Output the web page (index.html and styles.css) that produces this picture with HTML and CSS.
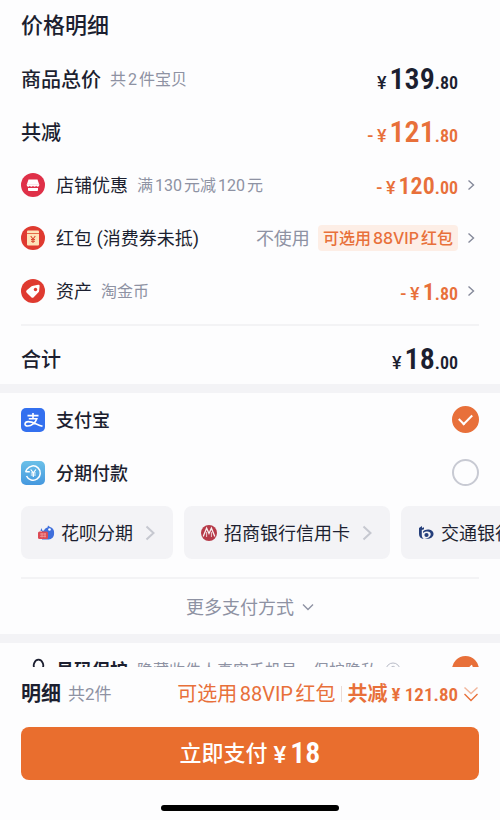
FILE: index.html
```html
<!DOCTYPE html>
<html lang="zh-CN">
<head>
<meta charset="utf-8">
<meta name="viewport" content="width=device-width, initial-scale=1">
<title>价格明细</title>
<link rel="stylesheet" href="styles.css">
</head>
<body>
<main class="sheet">
  <section class="prices">
    <h1 class="title">价格明细</h1>
    <div class="row">
      <h2 class="name">商品总价</h2><span class="note">共2件宝贝</span>
      <span class="price price-lg"><small class="yen">¥</small><b>139</b><small>.80</small></span>
    </div>
    <div class="row">
      <h2 class="name">共减</h2>
      <span class="price price-lg accent"><small class="yen">-&#8201;¥</small><b>121</b><small>.80</small></span>
    </div>
    <button class="row" type="button">
      <svg class="icon" viewBox="0 0 24 24"><circle cx="12" cy="12" r="12" fill="#df3048"/><path d="M7.500 6.500h9l1.800 5.200H5.700z" fill="#fff"/><path d="M5.700 11.500h12.600c0 2.600-2.400 2.600-3.100 1.200-.8 1.400-2.500 1.400-3.200 0-.8 1.400-2.500 1.400-3.200 0-.9 1.400-3.100 1.400-3.100-1.200z" fill="#fff"/><path d="M7 15h10v2a1 1 0 0 1-1 1H8a1 1 0 0 1-1-1z" fill="#fff"/></svg>
      <span class="label">店铺优惠</span><span class="note">满130元减120元</span>
      <span class="price accent"><small class="yen">-&#8201;¥</small><b>120</b><small>.00</small></span>
      <svg class="arrow" viewBox="0 0 8 12"><path d="M1.500 1.500L6.500 6l-5 4.500"/></svg>
    </button>
    <button class="row" type="button">
      <svg class="icon" viewBox="0 0 24 24"><circle cx="12" cy="12" r="12" fill="#df3a30"/><rect x="6" y="4.500" width="12" height="15" rx="1" fill="#fde3b8"/><path d="M6 7.500h12" stroke="#e56a48" stroke-width="1"/><path d="M9.700 10l2.300 3 2.300-3M12 13v4M10 13.500h4M10 15.300h4" fill="none" stroke="#dc4a32" stroke-width="1.100"/></svg>
      <span class="label">红包 (消费券未抵)</span>
      <span class="unused">不使用</span><span class="badge">可选用88VIP红包</span>
      <svg class="arrow" viewBox="0 0 8 12"><path d="M1.500 1.500L6.500 6l-5 4.500"/></svg>
    </button>
    <button class="row" type="button">
      <svg class="icon" viewBox="0 0 24 24"><circle cx="12" cy="12" r="12" fill="#df3a30"/><path d="M12.300 6.700l4.900-.9a1.200 1.200 0 0 1 1.400 1.300l-.5 5a2 2 0 0 1-.6 1.200l-4.800 4.900a1.700 1.700 0 0 1-2.400 0l-4.600-4.500a1.700 1.700 0 0 1 0-2.400l4.900-4a3 3 0 0 1 1.700-.6z" fill="#fff"/><circle cx="14.500" cy="10.500" r="1.700" fill="#df3a30"/></svg>
      <span class="label">资产</span><span class="note">淘金币</span>
      <span class="price accent"><small class="yen">-&#8201;¥</small><b>1</b><small>.80</small></span>
      <svg class="arrow" viewBox="0 0 8 12"><path d="M1.500 1.500L6.500 6l-5 4.500"/></svg>
    </button>
    <div class="row total">
      <h2 class="name">合计</h2>
      <span class="price price-lg"><small class="yen">¥</small><b>18</b><small>.00</small></span>
    </div>
  </section>

  <section class="payments">
    <label class="row">
      <svg class="icon" viewBox="0 0 24 24"><rect width="24" height="24" rx="5" fill="#3370ef"/><path d="M6.500 7.600h11M12 5v5.500M7.800 10.700h8c-1.300 4-5.300 7.300-9.100 7.300-4 0-3.300-4.400.5-4.400 4.300 0 8 2.700 14.300 4.700" fill="none" stroke="#fff" stroke-width="1.600"/></svg>
      <span class="label strong">支付宝</span>
      <input class="choice" type="radio" name="pay" checked>
    </label>
    <label class="row">
      <svg class="icon" viewBox="0 0 24 24"><defs><linearGradient id="sky" x2="0" y2="1"><stop stop-color="#6bc0e8"/><stop offset="1" stop-color="#4598df"/></linearGradient></defs><rect width="24" height="24" rx="5" fill="url(#sky)"/><path d="M6 8.200a7.200 7.200 0 1 1-.5 6.800M4.500 10.800h4.300M6 8l-1.500 2.800" fill="none" stroke="#fff" stroke-width="1.500"/><path d="M9.700 8.500l2.600 3.300 2.600-3.300M12.300 11.800V16M9.800 12h5M9.800 14h5" fill="none" stroke="#fff" stroke-width="1.200"/></svg>
      <span class="label strong">分期付款</span>
      <input class="choice" type="radio" name="pay">
    </label>
    <div class="chips">
      <button class="chip" type="button">
        <svg class="logo" viewBox="0 0 18 18"><path d="M7 6.500C8 4 9.500 4 10.500 3.500l.5-2 2 1.500c3.500 1 4.500 4 4 7.500-.5 4-4 5.500-8 5H5V7z" fill="#3f6fdc"/><circle cx="12.500" cy="5.500" r="1.300" fill="#fff"/><path d="M3.500 7l.8-3 1.300 3z" fill="#3f6fdc"/><rect x="1" y="7.500" width="10" height="7.500" rx="1.500" fill="#dc4a55"/><path d="M3 10h6M3 12.300h6M5 9v4.500M8 9v4.500" stroke="#f2a2a2" stroke-width=".8"/></svg>
        <span class="label">花呗分期</span>
        <svg class="more" viewBox="0 0 10 16"><path d="M1.500 1.500L8.500 8l-7 6.500"/></svg>
      </button>
      <button class="chip" type="button">
        <svg class="logo" viewBox="0 0 18 18"><circle cx="9" cy="9" r="8" fill="#b63b49"/><path d="M3.200 12.500L6.600 4.200 9 9.500l2.400-5.300 3.400 8.300" fill="none" stroke="#f8f0f2" stroke-width="1.300"/><path d="M6.600 8v5M11.400 8v5" stroke="#f8f0f2" stroke-width=".8"/></svg>
        <span class="label">招商银行信用卡</span>
        <svg class="more" viewBox="0 0 10 16"><path d="M1.500 1.500L8.500 8l-7 6.500"/></svg>
      </button>
      <button class="chip" type="button">
        <svg class="logo" viewBox="0 0 18 18"><path d="M2 4l3-2v2l2-.8v2L4.800 6v5c0 2 1 3.500 2.200 4-3.200-.3-5-2-5-5z" fill="#253f7b"/><path d="M6 7.500C8 4.500 16 4.500 16.500 9.500c.3 4-4.500 6.300-9 5 3 0 6.200-1.500 6.200-4.300 0-3-4.200-3.500-7.700-1.200z" fill="#253f7b"/><circle cx="9.500" cy="11" r="2.100" fill="#253f7b"/></svg>
        <span class="label">交通银行</span>
        <svg class="more" viewBox="0 0 10 16"><path d="M1.500 1.500L8.500 8l-7 6.500"/></svg>
      </button>
    </div>
    <button class="expand" type="button"><span class="label">更多支付方式</span>
      <svg viewBox="0 0 12 8"><path d="M1 1.500l5 5 5-5"/></svg>
    </button>
  </section>

  <section class="privacy">
    <label class="row">
      <svg class="icon" viewBox="0 0 24 24"><path d="M13.500 10.500c-1-2-1-4-.2-5.500 1.600-4.500 6.800-4.500 8.400 0 .8 1.500.8 3.500-.2 5.500" fill="none" stroke="#1c1f30" stroke-width="1.800"/></svg>
      <span class="label heavy">号码保护</span><span class="note">隐藏收件人真实手机号，保护隐私</span>
      <svg class="help" viewBox="0 0 16 16"><circle cx="8" cy="8" r="7"/><path d="M5.800 6.500c0-3 4.500-2.800 4.500-.2C10.300 8 8 8 8 10M8 11.300v1.200"/></svg>
      <input class="choice" type="checkbox" checked>
    </label>
  </section>
</main>

<footer class="paybar">
  <div class="summary">
    <strong>明细</strong><span class="count">共2件</span>
    <span class="offer">可选用88VIP红包</span>
    <span class="saved">共减<b>¥ 121.80</b></span>
    <svg viewBox="0 0 16 16"><path d="M1.500 1.500L8 7.500l6.500-6" opacity=".5"/><path d="M1.500 8L8 14.500 14.500 8"/></svg>
  </div>
  <button class="pay" type="button">立即支付 <b><small class="yen">¥</small>18</b></button>
  <div class="home"></div>
</footer>
</body>
</html>
```
FILE: styles.css
```css
:root {
  --ink: #1c1f30;
  --muted: #8e92a3;
  --accent: #e8703a;
  --fill: #f3f3f6;
  --sans: Roboto, "Noto Sans CJK SC", sans-serif;
  --digits: "Roboto Condensed", "Liberation Sans Narrow", Roboto, sans-serif;
}

* {
  box-sizing: border-box;
}

body {
  margin: 0;
  height: 100vh;
  display: flex;
  flex-direction: column;
  background: #fdfdfe;
  color: var(--ink);
  font: 18px/26px var(--sans);
  text-autospace: normal;
}

button {
  border: 0;
  padding: 0;
  background: none;
  color: inherit;
  font: inherit;
  text-align: left;
}

svg {
  flex: none;
  fill: none;
}

.sheet {
  flex: 1;
  min-height: 0;
  overflow: hidden;
}

.prices {
  padding: 0 21px;
}

.title {
  margin: 0;
  padding: 10px 0 10px;
  font-size: 22px;
  line-height: 32px;
  font-weight: 500;
}

.row {
  display: flex;
  align-items: center;
  width: 100%;
  height: 53px;
  white-space: nowrap;
}

.name,
.label,
.note,
.unused {
  padding-top: 3px;
}

.name {
  margin: 0;
  font-size: 20px;
  font-weight: 500;
}

.note {
  margin-left: 9px;
  color: var(--muted);
  font-size: 16px;
}

.icon {
  width: 24px;
  height: 24px;
  margin-right: 11px;
}

.strong {
  font-weight: 500;
}

.heavy {
  font-weight: 700;
}

.price {
  margin-left: auto;
  padding: 5px 21px 0 0;
  font: 600 24px/32px var(--digits);
}

.price b {
  margin-left: 3px;
  font-weight: 600;
}

.price small {
  font-size: 18px;
}

.price-lg {
  font-size: 30px;
}

.price .yen,
.pay .yen {
  font-family: Roboto, sans-serif;
  font-weight: 500;
}

.accent {
  color: var(--accent);
}

.arrow {
  width: 8px;
  height: 12px;
  margin-right: 4px;
  stroke: #85899a;
  stroke-width: 1.400;
}

.row > .price:has(+ .arrow) {
  padding-right: 9px;
}

.unused {
  margin-left: auto;
  color: var(--muted);
}

.badge {
  margin: 0 9px 0 8px;
  padding: 1px 5px 0;
  border-radius: 4px;
  background: #fdeee6;
  color: var(--accent);
  font: 500 16px/25px Inter, "Noto Sans CJK SC", sans-serif;
}

.total {
  height: 60px;
  margin-top: 7px;
  padding-top: 6px;
  border-top: 2px solid #f3f3f5;
}

.payments {
  padding: 0 21px;
  border-top: 9px solid var(--fill);
}

.choice {
  appearance: none;
  display: grid;
  place-items: center;
  width: 27px;
  height: 27px;
  margin: 0 0 0 auto;
  border: 2px solid #c8cad3;
  border-radius: 50%;
}

.choice:checked {
  border-color: var(--accent);
  background: var(--accent);
}

.choice:checked::after {
  content: "";
  width: 11px;
  height: 6px;
  margin-bottom: 4px;
  border: solid #fff;
  border-width: 0 0 2px 2px;
  transform: rotate(-45deg);
}

.chips {
  display: flex;
  gap: 11px;
  margin: 7px -21px 0 0;
  overflow: hidden;
}

.chip {
  flex: none;
  display: flex;
  align-items: center;
  height: 53px;
  padding: 0 18px 0 16px;
  border-radius: 8px;
  background: var(--fill);
}

.logo {
  width: 18px;
  height: 18px;
  margin-right: 6px;
}

.more {
  width: 10px;
  height: 16px;
  margin-left: 12px;
  stroke: #c6c8d0;
  stroke-width: 2;
}

.expand {
  display: flex;
  align-items: center;
  justify-content: center;
  gap: 8px;
  width: 100%;
  height: 57px;
  margin-top: 18px;
  border-top: 2px solid #f3f3f5;
  color: var(--muted);
}

.expand svg {
  width: 12px;
  height: 8px;
  stroke: var(--muted);
  stroke-width: 1.400;
}

.privacy {
  padding: 0 21px;
  border-top: 9px solid var(--fill);
}

.help {
  width: 16px;
  height: 16px;
  margin-left: 8px;
  stroke: #b9bcc8;
}

.paybar {
  padding: 0 21px 9px;
}

.summary {
  display: flex;
  align-items: center;
  height: 53px;
  padding-top: 1px;
  margin-bottom: 7px;
  color: var(--accent);
  font-size: 20px;
  white-space: nowrap;
}

.summary strong {
  color: var(--ink);
}

.count {
  margin-left: 7px;
  color: var(--muted);
  font-size: 17px;
  text-autospace: no-autospace;
}

.offer {
  margin-left: auto;
}

.saved {
  margin-left: 6px;
  padding-left: 6px;
  background: linear-gradient(#ebdcd6, #ebdcd6) left / 1px 16px no-repeat;
  font-weight: 600;
}

.saved b {
  margin-left: 4px;
  font: 600 19px/26px var(--digits);
}

.summary svg {
  width: 16px;
  height: 16px;
  margin-left: 5px;
  stroke: var(--accent);
  stroke-width: 1.400;
}

.pay {
  display: flex;
  align-items: center;
  justify-content: center;
  gap: 6px;
  width: 100%;
  height: 53px;
  border-radius: 8px;
  background: #e96e2e;
  color: #fff;
  font-size: 22px;
  font-weight: 500;
}

.pay b {
  font: 600 30px/32px var(--digits);
}

.pay small {
  margin-right: 4px;
  font-size: 24px;
}

.home {
  width: 39%;
  height: 6px;
  margin: 25px auto 0;
  border-radius: 3px;
  background: #000;
}
```
